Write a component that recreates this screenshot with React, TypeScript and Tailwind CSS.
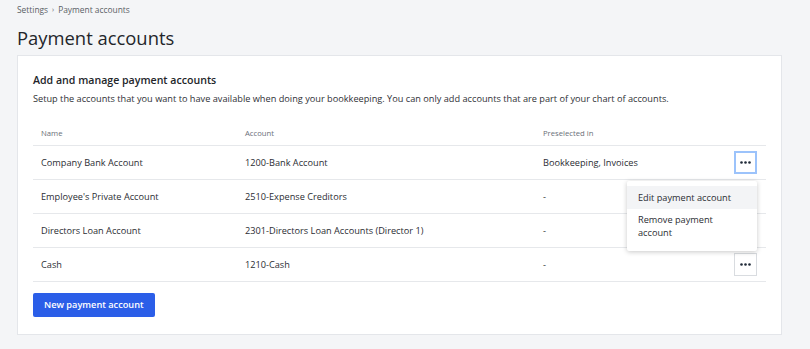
const rows = [
  { name: "Company Bank Account", account: "1200-Bank Account", pre: "Bookkeeping, Invoices", focused: true, menu: true },
  { name: "Employee's Private Account", account: "2510-Expense Creditors", pre: "-" },
  { name: "Directors Loan Account", account: "2301-Directors Loan Accounts (Director 1)", pre: "-" },
  { name: "Cash", account: "1210-Cash", pre: "-", button: true },
];

function Dots() {
  return (
    <svg width="11" height="3" viewBox="0 0 11 3" fill="#1f2937">
      <circle cx="1.5" cy="1.5" r="1.3" />
      <circle cx="5.5" cy="1.5" r="1.3" />
      <circle cx="9.5" cy="1.5" r="1.3" />
    </svg>
  );
}

export default function App() {
  return (
    <div
      className="min-h-[349px] w-[810px] bg-[#f4f5f7] px-[17px] pt-[3px] text-[#2b2d33]"
      style={{ fontFamily: '"Open Sans", "Noto Sans", sans-serif' }}
    >
      <div className="flex h-[14px] items-center gap-[4px] text-[8.4px] text-[#5b5f66]">
        <span>Settings</span>
        <span className="text-[7px]">›</span>
        <span>Payment accounts</span>
      </div>
      <h1 className="mt-[8px] text-[18.4px] leading-[26px] text-[#23252a]">Payment accounts</h1>
      <div className="mt-[4px] w-[765px] border border-[#e4e6ea] bg-white px-[15px] pb-[17px] pt-[16px]">
        <h2 className="text-[10.6px] font-semibold leading-[16px] text-[#23252a]">Add and manage payment accounts</h2>
        <p className="mt-[4px] text-[9.2px] leading-[14px] text-[#2f3136]">
          Setup the accounts that you want to have available when doing your bookkeeping. You can only add accounts that are part of your chart of accounts.
        </p>
        <div className="mt-[16px] w-[733px] text-[9.2px]">
          <div className="flex h-[24px] items-center border-b border-[#e6e8eb] text-[7.7px] text-[#6b7079]">
            <div className="w-[212px] pl-[8px]">Name</div>
            <div className="w-[298px]">Account</div>
            <div className="flex-1">Preselected in</div>
          </div>
          {rows.map((r) => (
            <div key={r.name} className="relative flex h-[34px] items-center border-b border-[#e6e8eb]">
              <div className="w-[212px] pl-[8px]">{r.name}</div>
              <div className="w-[298px]">{r.account}</div>
              <div className="flex-1">{r.pre}</div>
              {(r.focused || r.button) && (
                <button
                  className={
                    "mr-[9px] flex h-[23px] w-[23px] items-center justify-center bg-white " +
                    (r.focused ? "border-2 border-[#9cc3fb]" : "border border-[#d9dce0]")
                  }
                >
                  <Dots />
                </button>
              )}
              {r.menu && (
                <div className="absolute right-[9px] top-[35px] z-10 w-[130px] rounded-[2px] bg-white py-[5px] shadow-[0_1px_5px_rgba(0,0,0,0.22)]">
                  <div className="flex h-[23px] items-center bg-[#f3f4f6] px-[11px]">Edit payment account</div>
                  <div className="px-[11px] pb-[7px] pt-[4px] leading-[13px]">Remove payment account</div>
                </div>
              )}
            </div>
          ))}
        </div>
        <button className="mt-[11px] h-[24px] rounded-[2px] bg-[#2b5ee8] px-[11px] text-[9.2px] font-semibold text-white">
          New payment account
        </button>
      </div>
    </div>
  );
}
